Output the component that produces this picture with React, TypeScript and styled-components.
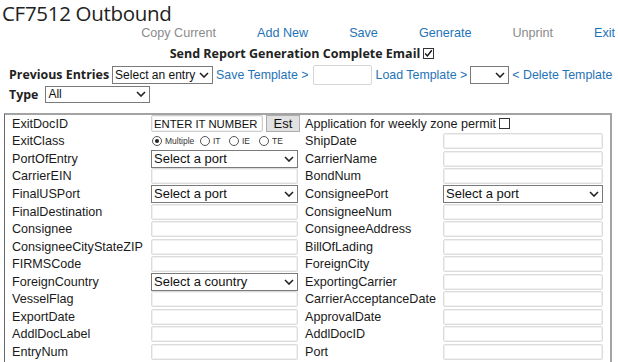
import React from 'react';
import styled, { createGlobalStyle } from 'styled-components';

const GlobalStyle = createGlobalStyle`
  body {
    margin: 0;
    background: #fff;
    font-family: 'Liberation Sans', Arial, sans-serif;
    color: #222;
  }
`;

const Page = styled.div`
  width: 618px;
  overflow: hidden;
`;

const Title = styled.h1`
  margin: 0;
  padding: 2px 0 0 2px;
  height: 22px;
  font-family: 'Open Sans', sans-serif;
  font-weight: 400;
  font-size: 20.5px;
  line-height: 22px;
  color: #222;
  letter-spacing: -0.3px;
`;

const Toolbar = styled.div`
  display: flex;
  justify-content: flex-end;
  gap: 41px;
  height: 19px;
  padding: 0 3px 0 0;
  font-size: 12.6px;
  line-height: 19px;
`;

const ToolLink = styled.a<{ $disabled?: boolean }>`
  color: ${(p) => (p.$disabled ? '#8a8a8a' : '#1f73b7')};
  text-decoration: none;
  cursor: ${(p) => (p.$disabled ? 'default' : 'pointer')};
`;

const EmailRow = styled.div`
  display: flex;
  justify-content: center;
  align-items: center;
  gap: 3px;
  height: 20px;
  padding-right: 14px;
  font-family: 'Open Sans', sans-serif;
  font-weight: 700;
  font-size: 12.5px;
`;

const Check = styled.span`
  display: inline-flex;
  align-items: center;
  justify-content: center;
  width: 11px;
  height: 11px;
  box-sizing: border-box;
  border: 1px solid #333;
  background: #fff;
`;

const TopRow = styled.div`
  display: flex;
  align-items: center;
  gap: 3px;
  height: 21px;
  padding-left: 9px;
  margin-top: 1px;
  font-size: 12.4px;
  white-space: nowrap;
`;

const Strong = styled.span`
  font-family: 'Open Sans', sans-serif;
  font-weight: 700;
  font-size: 12.4px;
`;

const SelectWrap = styled.span<{ $w: number; $h?: number }>`
  position: relative;
  display: inline-block;
  width: ${(p) => p.$w}px;
  height: ${(p) => p.$h ?? 18}px;
  flex: none;
`;

const NativeSelect = styled.select<{ $fs?: number }>`
  appearance: none;
  width: 100%;
  height: 100%;
  box-sizing: border-box;
  border: 1px solid #7a7a7a;
  border-radius: 0;
  background: #fff;
  margin: 0;
  padding: 0 14px 0 2px;
  font-family: 'Liberation Sans', Arial, sans-serif;
  font-size: ${(p) => p.$fs ?? 13}px;
  color: #111;
  outline: none;
`;

const Chevron = styled.svg`
  position: absolute;
  right: 4px;
  top: 50%;
  margin-top: -3px;
  pointer-events: none;
`;

const LinkText = styled.span`
  color: #1f73b7;
`;

const TemplateInput = styled.input`
  flex: none;
  width: 59px;
  height: 20px;
  box-sizing: border-box;
  border: 1px solid #d6d6d6;
  border-radius: 2px;
  padding: 0;
  margin: 0 1px;
`;

const TypeRow = styled(TopRow)`
  gap: 7px;
  height: 18px;
  margin-top: 0;
`;

const FormBox = styled.div`
  margin: 10px 0 0 4px;
  width: 608px;
  box-sizing: border-box;
  border: 2px solid #a3a3a3;
  border-left: 1px solid #6a6a6a;
  padding: 0 0 12px 7px;
  display: grid;
  grid-template-columns: 139px 154px 138px 160px;
  grid-auto-rows: 17.55px;
  align-items: center;
  font-size: 12.6px;
  color: #1a1a1a;
`;

const FirstRowCell = styled.div`
  display: flex;
  align-items: center;
  height: 19px;
`;

const Label = styled.span`
  white-space: nowrap;
`;

const TextInput = styled.input<{ $w?: number }>`
  width: ${(p) => p.$w ?? 147}px;
  height: 16px;
  box-sizing: border-box;
  border: 1px solid #dcdcdc;
  box-shadow: inset 0 0 0 1px #f1f1f1;
  border-radius: 2px;
  margin: 0;
  padding: 0 2px;
  font-family: 'Liberation Sans', Arial, sans-serif;
  font-size: 11.3px;
  color: #111;
`;

const ItInput = styled(TextInput)`
  height: 17px;
  border-color: #cfcfcf;
`;

const EstButton = styled.button`
  width: 34px;
  height: 17px;
  margin-left: 3px;
  padding: 0;
  box-sizing: border-box;
  border: 1px solid #acacac;
  background: #e1e1e1;
  font-family: 'Liberation Sans', Arial, sans-serif;
  font-size: 13px;
  color: #111;
`;

const Span2 = styled.div`
  grid-column: span 2;
  display: flex;
  align-items: center;
  gap: 3px;
`;

const Radios = styled.div`
  display: flex;
  align-items: center;
  padding-left: 1px;
  font-size: 8.5px;
  color: #333;
`;

const Radio = styled.span<{ $on?: boolean }>`
  flex: none;
  width: 10px;
  height: 10px;
  box-sizing: border-box;
  border: 1px solid #555;
  border-radius: 50%;
  display: inline-flex;
  align-items: center;
  justify-content: center;
  margin: 0 3px 0 0;
  &::after {
    content: '';
    width: 4px;
    height: 4px;
    border-radius: 50%;
    background: ${(p) => (p.$on ? '#222' : 'transparent')};
  }
`;

const RadioText = styled.span<{ $w: number }>`
  flex: none;
  width: ${(p) => p.$w}px;
`;

const chev = (
  <Chevron width="10" height="6" viewBox="0 0 10 6">
    <path d="M1 1l4 4 4-4" fill="none" stroke="#222" strokeWidth="1.6" />
  </Chevron>
);

const Select = ({ w, h, fs, value }: { w: number; h?: number; fs?: number; value: string }) => (
  <SelectWrap $w={w} $h={h}>
    <NativeSelect $fs={fs} defaultValue={value}>
      <option>{value}</option>
    </NativeSelect>
    {chev}
  </SelectWrap>
);

const CheckBox = ({ on }: { on?: boolean }) => (
  <Check>
    {on && (
      <svg width="9" height="9" viewBox="0 0 9 9">
        <path d="M1.2 4.6l2.2 2.3 4.4-5.6" fill="none" stroke="#111" strokeWidth="1.4" />
      </svg>
    )}
  </Check>
);

type Field = { label: string; kind: 'text' | 'select'; value?: string };

const rows: [Field, Field][] = [
  [{ label: 'PortOfEntry', kind: 'select', value: 'Select a port' }, { label: 'CarrierName', kind: 'text' }],
  [{ label: 'CarrierEIN', kind: 'text' }, { label: 'BondNum', kind: 'text' }],
  [{ label: 'FinalUSPort', kind: 'select', value: 'Select a port' }, { label: 'ConsigneePort', kind: 'select', value: 'Select a port' }],
  [{ label: 'FinalDestination', kind: 'text' }, { label: 'ConsigneeNum', kind: 'text' }],
  [{ label: 'Consignee', kind: 'text' }, { label: 'ConsigneeAddress', kind: 'text' }],
  [{ label: 'ConsigneeCityStateZIP', kind: 'text' }, { label: 'BillOfLading', kind: 'text' }],
  [{ label: 'FIRMSCode', kind: 'text' }, { label: 'ForeignCity', kind: 'text' }],
  [{ label: 'ForeignCountry', kind: 'select', value: 'Select a country' }, { label: 'ExportingCarrier', kind: 'text' }],
  [{ label: 'VesselFlag', kind: 'text' }, { label: 'CarrierAcceptanceDate', kind: 'text' }],
  [{ label: 'ExportDate', kind: 'text' }, { label: 'ApprovalDate', kind: 'text' }],
  [{ label: 'AddlDocLabel', kind: 'text' }, { label: 'AddlDocID', kind: 'text' }],
  [{ label: 'EntryNum', kind: 'text' }, { label: 'Port', kind: 'text' }],
];

const FieldControl = ({ f, w }: { f: Field; w: number }) =>
  f.kind === 'select' ? <Select w={w} value={f.value || ''} /> : <TextInput $w={w} />;

const App = () => {
  return (
    <Page>
      <GlobalStyle />
      <Title>CF7512 Outbound</Title>
      <Toolbar>
        <ToolLink $disabled>Copy Current</ToolLink>
        <ToolLink>Add New</ToolLink>
        <ToolLink>Save</ToolLink>
        <ToolLink>Generate</ToolLink>
        <ToolLink $disabled>Unprint</ToolLink>
        <ToolLink>Exit</ToolLink>
      </Toolbar>
      <EmailRow>
        Send Report Generation Complete Email
        <CheckBox on />
      </EmailRow>
      <TopRow>
        <Strong>Previous Entries</Strong>
        <Select w={101} fs={12} value="Select an entry" />
        <LinkText>Save Template &gt;</LinkText>
        <TemplateInput />
        <LinkText>Load Template &gt;</LinkText>
        <Select w={39} value="" />
        <LinkText>&lt; Delete Template</LinkText>
      </TopRow>
      <TypeRow>
        <Strong>Type</Strong>
        <Select w={105} h={17} fs={12} value="All" />
      </TypeRow>
      <FormBox>
        <Label>ExitDocID</Label>
        <FirstRowCell>
          <ItInput $w={112} defaultValue="ENTER IT NUMBER" />
          <EstButton>Est</EstButton>
        </FirstRowCell>
        <Span2>
          Application for weekly zone permit
          <CheckBox />
        </Span2>

        <Label>ExitClass</Label>
        <Radios>
          <Radio $on />
          <RadioText $w={35}>Multiple</RadioText>
          <Radio />
          <RadioText $w={16}>IT</RadioText>
          <Radio />
          <RadioText $w={17}>IE</RadioText>
          <Radio />
          <RadioText $w={14}>TE</RadioText>
        </Radios>
        <Label>ShipDate</Label>
        <TextInput $w={160} />

        {rows.map(([a, b]) => (
          <React.Fragment key={a.label}>
            <Label>{a.label}</Label>
            <FieldControl f={a} w={147} />
            <Label>{b.label}</Label>
            <FieldControl f={b} w={160} />
          </React.Fragment>
        ))}
      </FormBox>
    </Page>
  );
};

export default App;
